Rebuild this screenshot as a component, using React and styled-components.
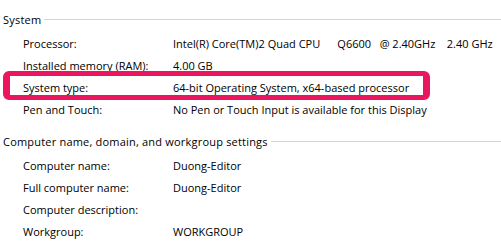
import React from 'react'
import styled, {createGlobalStyle} from "styled-components";

const GlobalStyle = createGlobalStyle`
  html, body { margin: 0; padding: 0; background: #fff; }
  body {
    font-family: "Open Sans", "Noto Sans", "Liberation Sans", sans-serif;
    font-size: 11px;
    color: #000;
  }
`

const systemRows = [
	{label: "Processor:", value: "Intel(R) Core(TM)2 Quad CPU      Q6600   @ 2.40GHz    2.40 GHz"},
	{label: "Installed memory (RAM):", value: "4.00 GB"},
	{label: "System type:", value: "64-bit Operating System, x64-based processor", marked: true},
	{label: "Pen and Touch:", value: "No Pen or Touch Input is available for this Display"},
]

const computerRows = [
	{label: "Computer name:", value: "Duong-Editor"},
	{label: "Full computer name:", value: "Duong-Editor"},
	{label: "Computer description:", value: ""},
	{label: "Workgroup:", value: "WORKGROUP"},
]

export default function App() {
	return (
		<>
			<GlobalStyle/>
			<Page>
				<Section>
					<Heading><span>System</span><Rule/></Heading>
					<Rows>
						{systemRows.map(r => (
							<Row key={r.label} $marked={r.marked}>
								<Label>{r.label}</Label>
								<Value>{r.value}</Value>
							</Row>
						))}
					</Rows>
				</Section>
				<Section $top={11}>
					<Heading><span>Computer name, domain, and workgroup settings</span><Rule/></Heading>
					<Rows>
						{computerRows.map(r => (
							<Row key={r.label}>
								<Label>{r.label}</Label>
								<Value>{r.value}</Value>
							</Row>
						))}
					</Rows>
				</Section>
			</Page>
		</>
	)
}

const Page = styled.div`
  width: 501px;
  height: 252px;
  overflow: hidden;
  padding-top: 9px;
  box-sizing: border-box;
`

const Section = styled.section`
  margin-top: ${p => p.$top || 0}px;
`

const Heading = styled.div`
  display: flex;
  align-items: center;
  height: 20px;
  padding-left: 3px;
  white-space: nowrap;
  letter-spacing: 0.2px;
  span { margin-right: 3px; }
`

const Rule = styled.div`
  flex: 1;
  height: 1px;
  background: #d5d5d5;
  margin-top: 1px;
`

const Rows = styled.div`
  display: flex;
  flex-direction: column;
  padding-top: 3px;
`

const Row = styled.div`
  position: relative;
  display: flex;
  align-items: center;
  height: 22px;
  padding-left: 23px;
  white-space: pre;
  ${p => p.$marked && `
    &::before {
      content: "";
      position: absolute;
      left: 3px;
      top: -5px;
      width: 427px;
      height: 29px;
      box-sizing: border-box;
      border: 5px solid #ea1660;
      border-left-width: 7px;
      border-right-width: 7px;
      border-radius: 6px;
    }
  `}
`

const Label = styled.span`
  width: 150px;
  flex-shrink: 0;
`

const Value = styled.span``
